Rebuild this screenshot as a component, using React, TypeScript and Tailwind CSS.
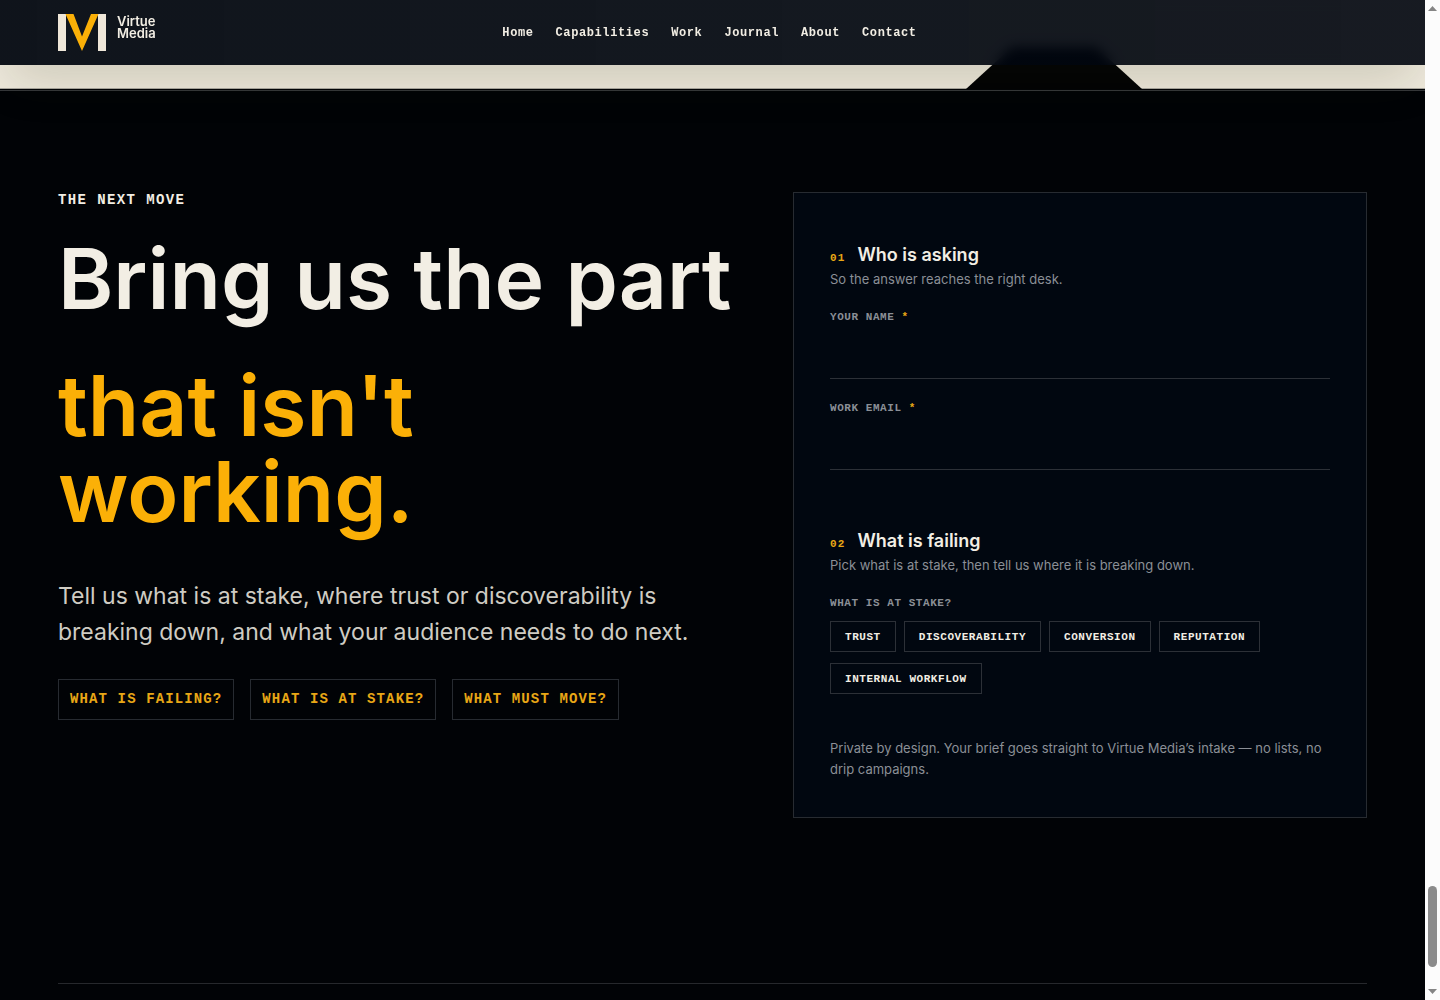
const navLinks = ["Home", "Capabilities", "Work", "Journal", "About", "Contact"];

const prompts = ["What is failing?", "What is at stake?", "What must move?"];

const stakes = ["Trust", "Discoverability", "Conversion", "Reputation", "Internal workflow"];

const fields = [
  { id: "name", label: "Your name", type: "text" },
  { id: "email", label: "Work email", type: "email" }
];

const mono = "font-['Liberation_Mono',monospace] font-bold";

function Logo() {
  return (
    <a href="#home" className="flex items-start gap-[11px] text-[#f2eee4]">
      <svg viewBox="0 0 48 37" className="w-12 h-[37px]" aria-hidden="true">
        <path d="M0 0h8v37H0zM40 0h8v37h-8z" fill="#efe7d9" />
        <path d="M7.5 0h8L24 22.5 33 0h7.500L24 37z" fill="#fbb007" />
      </svg>
      <span className="text-[13px] leading-3 font-semibold pt-px">
        Virtue
        <br />
        Media
      </span>
    </a>
  );
}

function Header() {
  return (
    <header className="sticky top-0 z-10 h-[65px] pl-[58px] pr-16 grid grid-cols-[1fr_auto_1fr] items-center bg-linear-to-r from-[#01060f]/94 to-[#01060f]/91 backdrop-blur-[6px] shadow-[0_20px_50px_-10px_rgba(40,40,10,0.2)]">
      <Logo />
      <nav className={`${mono} flex gap-[22px] text-xs tracking-wider text-[#f2eee4]`}>
        {navLinks.map((link) => (
          <a key={link} href={`#${link.toLowerCase()}`} className="hover:text-[#fbb007]">
            {link}
          </a>
        ))}
      </nav>
    </header>
  );
}

function StepHeading({ step, title, hint }: { step: string; title: string; hint: string }) {
  return (
    <>
      <div className="flex items-baseline gap-3">
        <span className={`${mono} text-[11px] tracking-widest text-[#e8a716]`}>{step}</span>
        <h3 className="text-lg leading-6 font-semibold text-[#f2eee4]">{title}</h3>
      </div>
      <p className="mt-[2px] text-[13px] leading-5 text-[#8b8f96]">{hint}</p>
    </>
  );
}

function BriefForm() {
  return (
    <form className="border border-[#272b31] bg-[#010710] px-9 pt-9 pb-[37px]">
      <section className="pt-[14px]">
        <StepHeading step="01" title="Who is asking" hint="So the answer reaches the right desk." />
        <div className="mt-5 flex flex-col gap-[21px]">
          {fields.map((f) => (
            <div key={f.id}>
              <label htmlFor={f.id} className={`${mono} block text-[11px] leading-4 tracking-wider uppercase text-[#8b8f96]`}>
                {f.label} <span className="text-[#e8a716]">*</span>
              </label>
              <input
                id={f.id}
                type={f.type}
                required
                className="mt-1 block w-full h-[50px] border-b border-[#2c3037] bg-transparent text-base text-[#f2eee4] shadow-none outline-none focus:border-[#fbb007]"
              />
            </div>
          ))}
        </div>
      </section>

      <section className="pt-[59px]">
        <StepHeading step="02" title="What is failing" hint="Pick what is at stake, then tell us where it is breaking down." />
        <p id="stake-label" className={`${mono} mt-5 text-[11px] leading-4 tracking-wider uppercase text-[#8b8f96]`}>
          What is at stake?
        </p>
        <div role="group" aria-labelledby="stake-label" className="mt-[10px] flex flex-wrap gap-x-2 gap-y-[11px]">
          {stakes.map((s) => (
            <button
              key={s}
              type="button"
              className={`${mono} h-[31px] border border-[#2c3037] px-[14px] text-[11px] leading-4 tracking-wider uppercase text-[#f2eee4] hover:border-[#fbb007]`}
            >
              {s}
            </button>
          ))}
        </div>
      </section>

      <p className="mt-11 text-[13px] leading-[21px] text-[#8b8f96]">
        Private by design. Your brief goes straight to Virtue Media’s intake — no lists, no drip campaigns.
      </p>
    </form>
  );
}

// Static rail at the right edge of the window
function ScrollRail() {
  return (
    <div className="z-20 w-[15px] shrink-0 h-screen sticky top-0 flex flex-col items-center bg-[#fcfcfc] py-[6px]" aria-hidden="true">
      <svg viewBox="0 0 9 5" className="w-[9px] h-[5px]">
        <path d="M4.500 0 9 5H0z" fill="#858585" />
      </svg>
      <div className="flex-1" />
      <div className="w-[9px] h-[81px] rounded-full bg-[#8b8b8b]" />
      <svg viewBox="0 0 9 5" className="mt-[22px] w-[9px] h-[5px]">
        <path d="M0 0h9L4.500 5z" fill="#858585" />
      </svg>
    </div>
  );
}

export default function App() {
  return (
    <div className="flex min-h-screen bg-[#010306] font-['Inter',sans-serif]">
      <div className="flex-1 min-w-0">
        <Header />

        {/* Tail of the light section, running under the header */}
        <div className="-mt-[65px] h-[89px] bg-[#eee9dc]">
          <svg viewBox="0 0 1425 89" preserveAspectRatio="none" className="block w-full h-[89px]" aria-hidden="true">
            <path d="M0 88h1425v1H0z" fill="#aaa79f" />
            <path d="M966 89 1012 47h84l46 42z" fill="#010204" />
          </svg>
        </div>

        <main className="mt-px border-t border-[#35373a] px-[58px] pt-[101px]">
          <div className="grid grid-cols-[1.183fr_1fr] gap-14">
            <div>
              <p className={`${mono} text-sm leading-4 tracking-widest uppercase text-[#f2eee4]`}>The next move</p>
              <h2 className="mt-7 text-[84px] leading-[86px] font-semibold text-[#f2eee4]">
                <span className="block whitespace-nowrap">Bring us the part</span>
                <span className="mt-[41px] block text-[#fbb007]">
                  that isn't
                  <br />
                  working.
                </span>
              </h2>
              <p className="mt-[43px] text-[23px] leading-9 text-[#cfccc3]">
                Tell us what is at stake, where trust or discoverability is breaking down, and what your audience needs to do next.
              </p>
              <ul className="mt-[29px] flex flex-wrap gap-4">
                {prompts.map((p) => (
                  <li key={p} className={`${mono} border border-[#272b31] px-[11px] py-[9px] text-sm leading-[21px] tracking-[0.08em] uppercase text-[#e8a716]`}>
                    {p}
                  </li>
                ))}
              </ul>
            </div>

            <BriefForm />
          </div>
          <div className="mt-[165px] h-[17px] border-t border-[#26282c]" />
        </main>
      </div>
      <ScrollRail />
    </div>
  );
}
